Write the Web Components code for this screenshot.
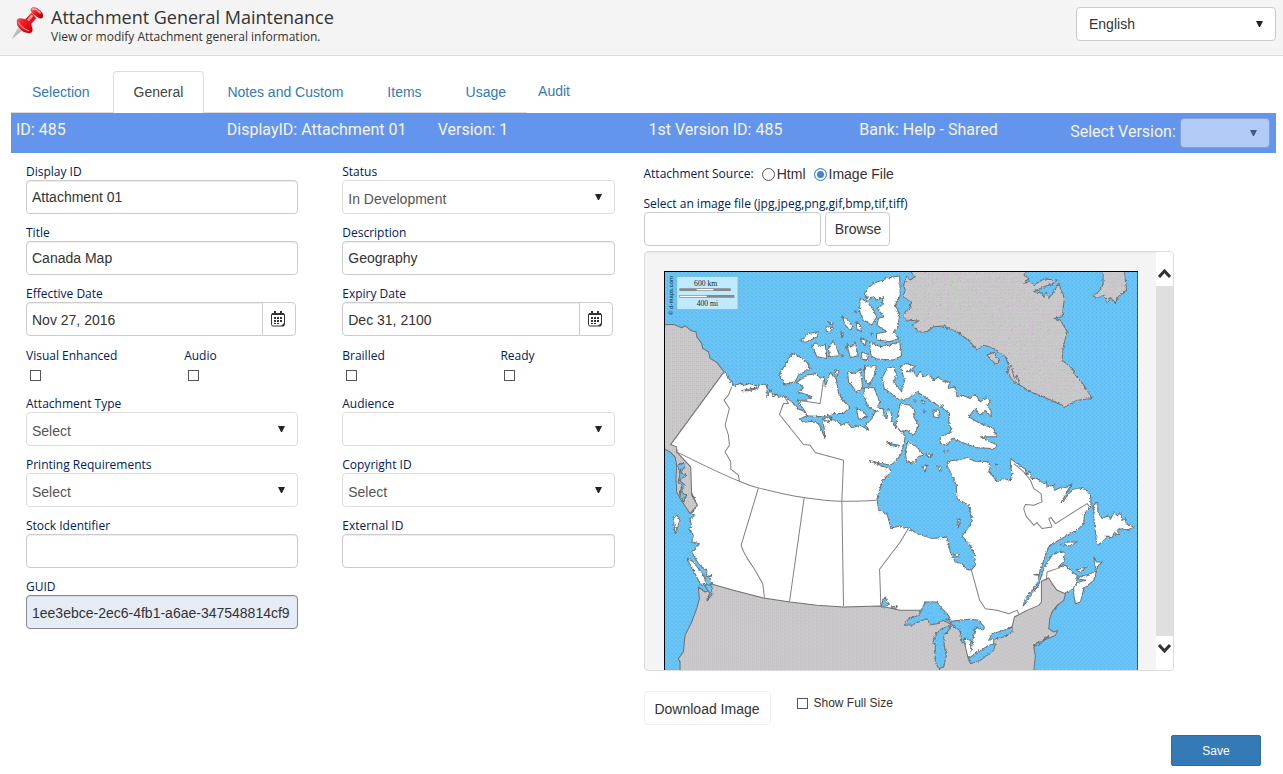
<!DOCTYPE html>
<html lang="en">
<head>
<meta charset="utf-8">
<title>Attachment General Maintenance</title>
<style>
body{margin:0;background:#fff;color:#333;font:14px/20px "Liberation Sans",Arial,sans-serif}
</style>
</head>
<body>
<page-header heading="Attachment General Maintenance" subheading="View or modify Attachment general information.">
  <pin-icon slot="icon"></pin-icon>
  <drop-down slot="tools" value="English" name="Language" variant="language"></drop-down>
</page-header>
<page-body>
  <tab-strip></tab-strip>
  <version-bar>
    <span>ID: 485</span><span>DisplayID: Attachment 01</span><span>Version: 1</span><span>1st Version ID: 485</span><span>Bank: Help - Shared</span>
    <drop-down variant="version" label="Select Version:" value="" disabled></drop-down>
  </version-bar>
  <form-columns>
    <form-grid slot="left">
      <text-field label="Display ID" value="Attachment 01"></text-field>
      <drop-down label="Status" value="In Development"></drop-down>
      <text-field label="Title" value="Canada Map"></text-field>
      <text-field label="Description" value="Geography"></text-field>
      <date-field label="Effective Date" value="Nov 27, 2016"></date-field>
      <date-field label="Expiry Date" value="Dec 31, 2100"></date-field>
      <check-field label="Visual Enhanced"></check-field>
      <check-field label="Audio"></check-field>
      <check-field label="Brailled"></check-field>
      <check-field label="Ready"></check-field>
      <drop-down label="Attachment Type" value="Select"></drop-down>
      <drop-down label="Audience" value=""></drop-down>
      <drop-down label="Printing Requirements" value="Select"></drop-down>
      <drop-down label="Copyright ID" value="Select"></drop-down>
      <text-field label="Stock Identifier" value=""></text-field>
      <text-field label="External ID" value=""></text-field>
      <text-field label="GUID" value="1ee3ebce-2ec6-4fb1-a6ae-347548814cf9" locked></text-field>
    </form-grid>
    <attachment-source slot="right">
      <canada-map></canada-map>
    </attachment-source>
  </form-columns>
  <save-bar>Save</save-bar>
</page-body>

<script>
const base = `
*{box-sizing:border-box}
input,select,button{font:14px/20px "Liberation Sans",Arial,sans-serif;color:#333;margin:0}
.lbl{display:block;font:12px/16px "Open Sans",sans-serif;color:#002058;white-space:nowrap}
.box{display:block;width:100%;height:34px;border:1px solid #ccc;border-radius:4px;background:#fff;padding:0 5px;box-shadow:inset 0 1px 1px rgba(0,0,0,.075)}
input[type=checkbox]{appearance:none;width:11px;height:11px;border:1px solid #555;background:#fff;display:block}
`;
function define(name, render) {
  customElements.define(name, class extends HTMLElement {
    connectedCallback() {
      if (this.shadowRoot) return;
      const t = document.createElement('template');
      t.innerHTML = '<style>' + base + '</style>' + render(this);
      this.attachShadow({mode: 'open'}).append(t.content.cloneNode(true));
    }
  });
}
const attr = (el, n) => el.getAttribute(n) || '';

define('page-header', el => `
<style>
:host{display:block;background:#f4f4f4;border-bottom:1px solid #ddd}
header{display:flex;align-items:flex-start;height:55px;padding:7px 7px 0 12px}
.t{flex:1;padding-left:7px}
h1{margin:0;font:18px/20px "Open Sans",sans-serif}
p{margin:0;padding-top:1px;font:12px/18px "Open Sans",sans-serif}
</style>
<header><slot name="icon"></slot><div class="t"><h1>${attr(el,'heading')}</h1><p>${attr(el,'subheading')}</p></div><slot name="tools"></slot></header>`);

define('pin-icon', () => `
<style>:host{display:block;width:32px;height:32px}svg{display:block}</style>
<svg width="32" height="32" viewBox="0 0 96 96" aria-hidden="true">
<defs>
<linearGradient id="r" x1="0" y1="0" x2="1" y2="1"><stop offset="0" stop-color="#ff8a80"/><stop offset=".35" stop-color="#f5222a"/><stop offset=".75" stop-color="#d4000c"/><stop offset="1" stop-color="#6d0006"/></linearGradient>
<linearGradient id="n" x1="0" y1="0" x2="1" y2="1"><stop offset="0" stop-color="#eee"/><stop offset="1" stop-color="#888"/></linearGradient>
</defs>
<path d="M1 94L18 64L28 72Z" fill="url(#n)" stroke="#999" stroke-width="1"/>
<path d="M15 42Q16 32 28 35L41 37L58 19L70 34L57 50L61 66Q62 80 49 78Q34 76 24 65Q14 56 15 42Z" fill="url(#r)" stroke="#a80010" stroke-width="1"/>
<path d="M18 45Q27 62 52 72" fill="none" stroke="#ff7a74" stroke-width="4"/>
<path d="M42 37Q44 47 57 51L73 34L58 18Z" fill="#dc1820"/>
<path d="M45 38L58 22L64 27L51 43Z" fill="#ffb0aa" opacity=".8"/>
<path d="M57 6Q61-3 77 5Q94 16 93 28Q92 37 80 32Q54 18 57 6Z" fill="url(#r)" stroke="#b0000c" stroke-width="1"/>
<path d="M62 7Q70 3 84 17" fill="none" stroke="#ffaaa5" stroke-width="5" stroke-linecap="round"/>
</svg>`);

define('drop-down', el => `
<style>
:host{display:block;min-width:0}
.w{display:grid;align-items:center}
.w>*{grid-area:1/1}
.w select{appearance:none;box-shadow:none;color:#555;border-color:#ddd;padding:4px 5px 0;opacity:1}
svg{justify-self:end;margin-right:12px;pointer-events:none}
.w.language{width:200px}
.w.language select{color:#333;border-color:#ccc;padding:0 12px}
:host([variant=version]){display:flex;align-items:flex-start;gap:4px}
:host([variant=version]) .lbl{font:inherit;color:inherit;padding-top:4px}
.w.version{width:90px;opacity:.5}
.w.version select{height:30px;border-color:#aaa;padding:0 5px}
</style>
${el.hasAttribute('label')?`<label class="lbl" for="s">${attr(el,'label')}</label>`:''}
<div class="w ${attr(el,'variant')}"><select class="box" id="s" ${el.hasAttribute('label')?'':`aria-label="${attr(el,'name')}"`} ${el.hasAttribute('disabled')?'disabled':''}><option>${attr(el,'value')}</option></select>
<svg width="8" height="8" viewBox="0 0 8 8" aria-hidden="true"><path d="M0 1H7L4 7H3Z" fill="#222"/></svg></div>`);

define('page-body', () => `
<style>:host{display:block;padding:15px 7px 8px 11px}</style><slot></slot>`);

define('tab-strip', () => `
<style>
:host{display:block}
nav{display:flex}
ul{display:flex;gap:2px;list-style:none;margin:0;padding:0;border-bottom:1px solid #ddd}
a{display:block;color:#337ab7;text-decoration:none;white-space:nowrap}
li a{padding:10px 20px;border:1px solid transparent;border-bottom:0}
li.on a{color:#444;background:#fff;border-color:#ddd;border-radius:4px 4px 0 0;margin-bottom:-1px;padding-bottom:11px}
nav>a{padding:10px 11px}
</style>
<nav><ul><li><a href="#selection">Selection</a></li><li class="on"><a href="#general">General</a></li><li><a href="#notes">Notes and Custom</a></li><li><a href="#items">Items</a></li><li><a href="#usage">Usage</a></li></ul><a href="#audit">Audit</a></nav>`);

define('version-bar', () => `
<style>
:host{display:grid;grid-template-columns:repeat(6,1fr);background:#6495ed;color:#f4f4f4;font:16px/20px Roboto,sans-serif;height:40px}
::slotted(span){padding:7px 0 0 5px;white-space:nowrap}
::slotted(drop-down){padding:5px 0 0 5px}
</style>
<slot></slot>`);

define('form-columns', () => `
<style>:host{display:grid;grid-template-columns:1fr 1fr;padding-top:11px}</style><slot name="left"></slot><slot name="right"></slot>`);

define('form-grid', () => `
<style>
:host{display:grid;grid-template-columns:repeat(4,1fr);row-gap:11px;align-content:start}
::slotted(*){grid-column:span 2;padding:0 29px 0 15px}
::slotted(check-field){grid-column:span 1;padding:1px 0 0 15px}
</style><slot></slot>`);

define('text-field', el => `
<style>:host{display:block;min-width:0}
.box.locked{background:#e6ecf5;border-color:#888;padding-top:2px}</style>
<label class="lbl" for="i">${attr(el,'label')}</label><input id="i" type="text" class="box ${el.hasAttribute('locked')?'locked':''}" value="${attr(el,'value')}" ${el.hasAttribute('locked')?'readonly':''}>`);

define('date-field', el => `
<style>
:host{display:block;min-width:0}
.g{display:flex;margin-right:2px}
.g input{flex:1;min-width:0;border-radius:4px 0 0 4px;padding-top:2px}
.g button{width:34px;flex:none;margin-left:-1px;border-radius:0 4px 4px 0;display:grid;place-items:center;padding:0 2px 0 0;box-shadow:none}
</style>
<label class="lbl" for="d">${attr(el,'label')}</label>
<div class="g"><input id="d" type="text" class="box" value="${attr(el,'value')}"><button type="button" class="box" aria-label="Open calendar">
<svg width="14" height="16" viewBox="0 0 14 16" aria-hidden="true"><rect x=".5" y="2.5" width="13" height="12.500" rx="1.500" fill="#fff" stroke="#333"/><path d="M1 2H13V4H1Z" fill="#333"/><path d="M3 0H5V3H3ZM9 0H11V3H9Z" fill="#333"/><path d="M3 6H5V8H3ZM6 6H8V8H6ZM9 6H11V8H9ZM3 9H5V11H3ZM6 9H8V11H6ZM9 9H11V11H9ZM3 12H5V13H3ZM6 12H8V13H6Z" fill="#333"/><path d="M10 15L13 12V15Z" fill="#333"/></svg></button></div>`);

define('check-field', el => `
<style>:host{display:block}input{margin:6px 0 4px 4px}</style>
<label class="lbl" for="c">${attr(el,'label')}</label><input type="checkbox" id="c">`);

define('attachment-source', () => `
<style>
:host{display:block;padding-right:102px}
.src{display:flex;align-items:center;height:20px;border:0;padding:0;margin:0}
.src .lbl{padding-right:8px}
.src label{margin-right:8px}
input[type=radio]{appearance:none;width:13px;height:13px;border:1px solid #555;border-radius:50%;background:#fff;margin-right:2px}
input[type=radio]:checked{border-color:#3c87d0;background:#3c87d0;box-shadow:inset 0 0 0 2px #fff}
.up{display:flex;gap:4px;margin-bottom:5px}
.up input{width:177px;box-shadow:none}
.up button{width:65px;padding:0 0 0 2px;box-shadow:none}
.panel{display:flex;height:420px;border:1px solid #ddd;border-radius:4px;background:#f4f4f4;overflow:hidden;box-shadow:inset 0 1px 1px rgba(0,0,0,.05)}
.view{flex:1;min-width:0;overflow:hidden;padding:19px 18px 0 19px}
.bar{width:17px;flex:none;background:#dfdfdf;display:flex;flex-direction:column;justify-content:space-between}
.bar button{height:34px;width:17px;border:0;padding:9px 1px 0 0;background:#fff;display:grid;place-items:center}
.bar button+button{padding:0 1px 9px 0}
.foot{display:flex;align-items:flex-start;margin-top:20px}
.foot button{height:34px;width:127px;border:1px solid #eee;border-radius:4px;background:#fff;padding:2px 0 0;white-space:nowrap}
.foot label{font:12px/16px "Liberation Sans",Arial,sans-serif;margin:4px 0 0 6px}
.foot input{margin:7px 0 0 26px}
.file{margin:12px 0 0}
</style>
<div class="src" role="radiogroup" aria-labelledby="as"><span class="lbl" id="as">Attachment Source:</span><input type="radio" name="s" id="h"><label for="h">Html</label><input type="radio" name="s" id="f" checked><label for="f">Image File</label></div>
<label class="lbl file" for="p">Select an image file (jpg,jpeg,png,gif,bmp,tif,tiff)</label>
<div class="up"><input class="box" id="p" type="text"><button class="box" type="button">Browse</button></div>
<div class="panel"><div class="view"><slot></slot></div>
<div class="bar"><button type="button" aria-label="Scroll up"><svg width="13" height="9" viewBox="0 0 13 9"><path d="M1 8L6.500 2L12 8" fill="none" stroke="#333" stroke-width="3"/></svg></button><button type="button" aria-label="Scroll down"><svg width="13" height="9" viewBox="0 0 13 9"><path d="M1 1L6.500 7L12 1" fill="none" stroke="#333" stroke-width="3"/></svg></button></div></div>
<div class="foot"><button type="button">Download Image</button><input type="checkbox" id="z"><label for="z">Show Full Size</label></div>`);

define('save-bar', () => `
<style>
:host{display:flex;justify-content:flex-end;padding:10px 15px 0 0}
button{width:90px;height:31px;border:1px solid #2e6da4;border-radius:2px;background:#337ab7;color:#fff;font-size:12px}
</style><button type="button"><slot></slot></button>`);

define('canada-map', () => `
<style>:host{display:block}svg{display:block;width:100%;height:auto}
text{fill:#222;font-family:"Liberation Serif",serif;font-size:23px}</style>
<svg viewBox="12 18 1422 1197" role="img" aria-label="Outline map of Canada">
<defs>
<pattern id="sea" width="12" height="12" patternUnits="userSpaceOnUse"><rect width="12" height="12" fill="#66ccff"/><path d="M0 0H3V3H0ZM6 3H9V6H6ZM3 6H6V9H3ZM9 9H12V12H9Z" fill="#62aaee"/><path d="M9 0H12V3H9ZM0 9H3V12H0Z" fill="#70c0dc"/></pattern>
<pattern id="grey" width="12" height="12" patternUnits="userSpaceOnUse"><rect width="12" height="12" fill="#cccccc"/><path d="M0 0H3V3H0ZM6 6H9V9H6Z" fill="#c8a8c8"/><path d="M6 0H9V3H6ZM0 6H3V9H0Z" fill="#b8c8b8"/></pattern>
<filter id="coast" filterUnits="userSpaceOnUse" x="0" y="0" width="1446" height="1240" color-interpolation-filters="sRGB"><feTurbulence type="fractalNoise" baseFrequency="0.14" numOctaves="2" seed="7"/><feDisplacementMap in="SourceGraphic" scale="10" xChannelSelector="R" yChannelSelector="G"/></filter>
</defs>
<rect x="12" y="18" width="1422" height="1210" fill="url(#sea)"/>
<g stroke="#707070" stroke-width="3" stroke-linejoin="round">
<g filter="url(#coast)">
<g fill="url(#grey)">
<path d="M732 0L765 35L750 45L740 35L730 60L735 75L728 95L750 110L752 128L735 140L730 155L740 165L775 168L755 180L775 200L800 200L820 185L850 183L890 200L930 230L950 255L970 240L1000 250L1035 275L1045 300L1040 320L1070 355L1110 380L1160 400L1215 425L1250 405L1295 400L1270 360L1245 330L1235 310L1205 285L1208 250L1215 220L1220 200L1200 165L1180 160L1205 155L1212 100L1195 55L1180 80L1165 100L1158 82L1150 97L1145 85L1120 80L1150 65L1180 55L1190 45L1150 42L1120 60L1110 50L1090 55L1105 40L1090 30L1115 0Z"/>
<path d="M1328 0L1328 60L1310 85L1295 90L1310 100L1330 90L1340 112L1350 98L1365 115L1370 98L1398 75L1390 0ZM980 270L1000 262L1018 290L1005 297ZM1040 322L1052 300L1062 340L1070 330L1078 360L1060 350Z"/>
</g>
<g fill="#fff">
<path d="M192 320L210 345L222 362L240 355L250 362L268 355L290 362L312 357L322 362L320 395L332 372L340 395L345 385L358 396L372 392L395 410L412 430L435 440L440 452L418 462L430 472L455 468L475 475L487 500L494 520L492 490L488 470L510 462L525 465L545 480L560 470L575 488L600 480L625 495L618 478L635 460L650 430L668 430L672 452L680 460L684 430L692 440L696 470L706 490L714 480L722 495L735 515L728 545L722 568L705 590L690 600L625 586L690 612L692 620L668 645L650 700L655 735L680 745L692 788L720 782L745 788L770 805L815 820L860 815L870 860L885 890L905 895L920 912L932 915L945 900L942 865L925 835L905 812L930 780L935 755L925 720L890 700L888 660L870 620L860 600L862 588L905 582L920 578L945 588L985 590L990 605L985 620L1000 635L1010 650L1030 640L1050 645L1055 625L1050 600L1052 580L1070 595L1095 612L1098 630L1110 618L1112 640L1130 640L1150 655L1158 648L1160 665L1180 660L1182 675L1205 665L1215 668L1235 655L1225 670L1215 690L1202 710L1212 705L1225 685L1240 672L1255 668L1275 672L1290 690L1292 715L1290 725L1272 745L1270 775L1250 795L1225 808L1190 828L1165 845L1155 870L1145 900L1138 920L1130 955L1110 980L1095 1000L1088 1022L1095 1015L1115 985L1135 960L1145 925L1155 900L1175 870L1200 858L1215 862L1210 890L1195 905L1215 900L1235 920L1250 930L1248 955L1240 970L1215 982L1205 1000L1160 1060L1062 1110L1000 1150L930 1180L890 1160L870 1070L860 1045L835 1030L790 1030L780 1050L160 1050L155 955L150 940L155 930L140 935L140 915L125 905L112 890L95 860L105 850L118 835L95 830L100 810L85 790L95 785L90 760L105 750L95 745L112 720L98 690L60 600L50 558L30 540L60 400Z"/>
<path d="M612 85L625 68L640 55L680 40L718 32L720 90L705 120L718 150L712 190L700 200L715 220L690 230L650 225L648 205L680 200L650 180L655 160L672 155L650 130L665 120L670 95L650 105L640 95L625 105ZM600 100L620 110L640 135L650 155L635 180L610 165L598 140ZM628 230L660 245L690 240L718 230L724 272L700 285L650 282L632 272Z"/>
<path d="M720 305L740 295L765 305L740 320L760 320L770 335L780 318L790 335L805 328L820 345L835 335L850 350L870 350L862 370L885 365L890 395L905 390L930 400L945 388L960 410L975 398L990 405L980 425L992 435L992 455L975 435L960 450L945 430L925 455L960 475L1000 490L1010 515L960 515L1010 540L1000 550L950 548L900 530L875 520L860 540L840 535L840 515L875 500L865 470L868 445L840 425L800 400L770 380L745 400L718 405L700 390L672 370L665 340L680 310L700 305L710 330L700 350L724 380L733 345Z"/>
<path d="M720 415L750 420L765 440L760 455L775 480L760 510L740 495L722 500L706 480ZM742 530L770 545L790 570L770 575L765 595L740 590L735 560Z"/>
<path d="M412 350L440 330L470 325L480 340L492 335L495 365L510 322L528 340L535 385L548 405L568 427L550 445L520 445L490 455L440 452L435 440L425 425L412 405L440 405L455 395L415 380L430 368Z"/>
<path d="M395 265L410 270L440 290L450 310L415 330L405 350L372 358L358 325L378 295ZM455 240L468 233L480 245L495 238L500 280L470 275ZM422 225L445 205L475 200L472 215L435 232ZM505 250L518 226L530 250L538 272L508 275ZM560 236L575 248L585 230L594 272L570 277ZM546 153L562 165L578 185L570 195L555 180ZM588 168L600 180L604 200L590 192ZM498 185L518 188L508 203L498 198ZM502 172L520 173L515 180ZM542 198L550 210L545 218ZM600 220L620 226L612 242ZM604 260L624 268L622 287L605 282ZM582 135L588 138L584 142ZM545 268L550 272L545 276ZM555 245L564 246L558 250ZM630 203L638 205L634 210Z"/>
<path d="M613 303L648 303L642 332L625 362L612 340ZM562 320L585 325L600 312L608 370L590 382L565 348ZM588 428L610 440L622 455L595 462ZM613 368L642 368L658 410L650 440L625 425L610 395ZM523 315L537 317L530 335ZM485 462L515 455L508 470ZM818 435L838 435L835 458L820 455ZM783 405L795 410L790 418ZM795 565L815 568L808 577ZM785 605L800 600L795 620ZM832 602L845 605L838 618ZM890 765L900 762L895 785ZM880 868L900 868L890 875ZM760 402L768 405L763 410ZM842 418L850 420L845 430ZM790 437L796 440L792 443ZM850 558L864 556L856 565ZM1005 596L1012 598L1007 602Z"/>
<path d="M1300 720L1312 710L1312 740L1325 760L1345 750L1350 762L1360 742L1372 752L1380 740L1385 765L1398 760L1395 775L1420 785L1400 795L1385 790L1370 795L1378 810L1360 805L1355 818L1340 812L1315 840L1308 830L1305 800L1300 760ZM1240 990L1240 965L1255 950L1275 945L1250 940L1308 918L1300 945L1270 970L1260 1010L1245 1015ZM1300 875L1308 890L1325 890L1305 910ZM1200 838L1220 830L1250 830L1230 842ZM1245 915L1280 905L1260 920ZM80 878L100 890L130 930L142 960L120 955L100 915ZM40 760L50 750L60 765L45 805Z"/>
</g>
</g>
<g fill="url(#grey)">
<path d="M0 180L40 178L65 188L75 182L95 198L108 200L110 215L125 235L128 250L145 260L150 280L170 292L192 320L32 538L50 545L50 560L92 605L95 690L112 720L90 745L80 730L60 700L50 680L48 640L50 600L45 575L30 560L0 545Z"/>
<path d="M115 965L135 980L142 978L152 955L220 975L310 998L390 1010L470 1020L550 1025L660 1022L720 1035L790 1035L850 1065L895 1090L912 1130L925 1185L1000 1150L1000 1115L1055 1085L1062 1055L1100 1035L1135 1020L1143 1010L1143 948L1165 938L1175 955L1190 975L1215 985L1210 1005L1190 1020L1175 1040L1168 1060L1165 1090L1180 1100L1192 1095L1185 1110L1150 1125L1120 1145L1125 1170L1118 1240L60 1240L60 1190L55 1180L70 1160L75 1110L95 1070L110 1030L118 1000Z"/>
</g>
<g fill="url(#sea)" filter="url(#coast)">
<path d="M732 1080L745 1060L775 1050L795 1010L830 1010L845 1030L860 1045L872 1062L850 1065L830 1075L810 1078L800 1060L770 1072L755 1080ZM825 1110L840 1092L870 1080L870 1090L850 1110L852 1140L858 1170L850 1205L835 1210L825 1190L825 1140L818 1130ZM870 1068L880 1085L900 1095L905 1130L915 1138L912 1118L930 1125L932 1160L938 1120L945 1085L970 1095L972 1085L955 1065L930 1062ZM925 1180L930 1195L960 1185L1000 1155L1005 1135L985 1140L960 1155L940 1168ZM985 1125L995 1105L1030 1095L1055 1085L1055 1100L1030 1115L1000 1122ZM662 1025L668 1005L675 995L680 1010L688 1012L678 1024ZM692 1025L712 1022L705 1032ZM1120 1140L1165 1112L1135 1140Z"/>
<path d="M680 532L718 542L700 545ZM245 377L272 370L295 368L270 377ZM132 958L155 960L155 990L140 1005L150 985ZM52 600L70 592L75 605L60 620L78 630L58 645L75 660L62 680L80 690L70 710L58 690L66 660L54 650L60 630ZM1120 928L1135 926L1135 930Z"/>
</g>
<g fill="none" stroke="#808080" stroke-width="3">
<path d="M192 320L32 538M215 365L205 390L192 405L208 430L195 480L205 510L208 540L195 560L212 590L212 612L235 630L238 648M50 560Q180 625 238 648Q270 662 295 668Q370 688 430 697Q500 708 545 708Q610 708 648 705M295 668L243 840L250 858L262 880L285 915L308 955L313 998M432 698L388 1010M550 585L545 708L550 1022M372 392L385 415L370 415L358 448L430 538L450 540L465 562L550 585M662 1022L658 912L720 830L745 788M932 910L958 1005L975 1030L1010 1035L1045 1045L1070 1035L1075 1045M1060 595L1090 620L1110 645L1120 670L1142 685L1145 710L1120 720L1095 718L1090 730L1098 755L1112 770L1120 780L1130 772L1145 790L1175 785L1165 760L1172 757L1185 775L1280 715L1288 725M490 345L480 415L412 405M1212 895L1190 910L1160 920L1158 945"/>
</g>
</g>
<rect x="50" y="34" width="184" height="100" fill="#bfeaff" stroke="#71bbdb" stroke-width="3"/>
<path d="M58 70H212V78H58ZM58 90H223V98H58Z" fill="#888"/><path d="M110 72H160V76H110ZM60 92H140V96H60Z" fill="#fff"/>
<text x="137" y="62" text-anchor="middle">600 km</text><text x="142" y="123" text-anchor="middle">400 mi</text>
<text transform="translate(40 150) rotate(-90)" style="font-family:'Liberation Sans',sans-serif;font-size:18px">© d-maps.com</text>
<path d="M13.500 1230V19.500H1432.500V1230" fill="none" stroke="#000" stroke-width="3"/>
</svg>`);
</script>
</body>
</html>
